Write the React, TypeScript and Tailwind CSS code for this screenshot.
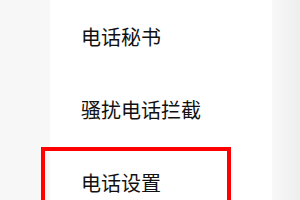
import React from 'react';

const items = ['电话秘书', '骚扰电话拦截', '电话设置'];

const App: React.FC = () => {
  return (
    <div className="relative w-[300px] h-[200px] overflow-hidden flex bg-[#f6f6f6] font-['Noto_Sans_CJK_SC',sans-serif]">
      <div className="w-[50px] bg-[#f7f7f7]" />
      <div className="w-[222px] bg-white flex flex-col">
        {items.map((label) => (
          <div key={label} className="h-[73px] shrink-0 flex items-center pl-[31px] text-[20px] text-[#111]">
            {label}
          </div>
        ))}
      </div>
      <div className="flex-1 bg-gradient-to-r from-[#f8f8f8] to-[#eeeeee]" />
      <div className="absolute left-[41px] top-[147px] w-[190px] h-[80px] border-4 border-[#ff0000]" />
    </div>
  );
};

export default App;
